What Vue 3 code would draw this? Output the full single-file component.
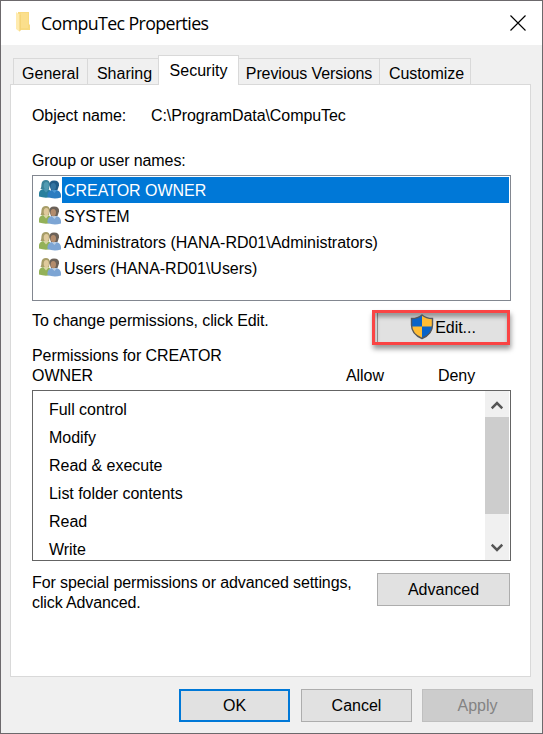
<script setup>
const tabs = [
  { label: 'General', cls: 'general' },
  { label: 'Sharing', cls: 'sharing' },
  { label: 'Security', cls: 'active' },
  { label: 'Previous Versions', cls: 'previous' },
  { label: 'Customize', cls: 'customize' },
]
const users = ['CREATOR OWNER', 'SYSTEM', 'Administrators (HANA-RD01\\Administrators)', 'Users (HANA-RD01\\Users)']
const permissions = ['Full control', 'Modify', 'Read & execute', 'List folder contents', 'Read', 'Write']
</script>

<template>
  <div class="window">
    <header class="titlebar">
      <svg class="folder" width="18" height="24" viewBox="0 0 18 24">
        <path d="M3 2h11v12l1 1v5H3z" fill="#f8da80" />
        <path d="M6 3h7v15H6z" fill="#fbdf8c" />
        <path d="M1 2l4 3v17l-4-3z" fill="#ffebae" />
        <path d="M4.500 5h1v16h-1z" fill="#f2d071" />
      </svg>
      <h1>CompuTec Properties</h1>
      <svg class="close" width="16" height="16" viewBox="0 0 16 16">
        <path d="M.5 .5l15 15M15.5 .5l-15 15" stroke="#000" stroke-width="1.15" />
      </svg>
    </header>

    <nav class="tabs">
      <div v-for="t in tabs" :key="t.label" class="tab" :class="t.cls"><span>{{ t.label }}</span></div>
    </nav>

    <main class="panel">
      <div class="object"><span class="oname">Object name:</span><span class="path">C:\ProgramData\CompuTec</span></div>
      <div class="group-label">Group or user names:</div>
      <ul class="users">
        <li v-for="(u, i) in users" :key="u" :class="{ selected: i === 0 }">
          <svg class="people" width="22" height="19" viewBox="0 0 22 19">
            <path d="M0 16.500v-3q0-3.500 4-4.500h5q3 1 3 5v3q-6 1.500-12-.5z" :fill="i ? '#93b158' : '#287f9d'" />
            <path d="M4 9l3 3.500L10 9z" :fill="i ? '#d9d6a5' : '#4a93b0'" />
            <path d="M1.500 9Q2.500 7 2.500 4q.5-4 4.500-4 3.500 0 4 4l-1 5z" :fill="i ? '#a79d68' : '#3a8299'" />
            <ellipse cx="7.300" cy="5.700" rx="2.600" ry="3.700" :fill="i ? '#dfca9c' : '#519bb2'" />
            <path d="M8.500 17v-2.500q.5-3.500 4-4.500h5q4 1 4.500 5v2.500q-7 2-13.500-.5z" :fill="i ? '#7da5d4' : '#2b7cc0'" />
            <path d="M12.500 10l3 3 2.500-3z" :fill="i ? '#b9cde4' : '#4a97d3'" />
            <path d="M10.500 5.500q-.5-5 4.500-5 5.500 0 5 5l-1.500 4.500H12z" :fill="i ? '#6b6158' : '#205a86'" />
            <ellipse cx="14.300" cy="6.600" rx="2.700" ry="3.700" :fill="i ? '#b38c6d' : '#3373a0'" />
          </svg>
          <span class="uname">{{ u }}</span>
        </li>
      </ul>
      <div class="edit-row">
        <span>To change permissions, click Edit.</span>
        <button class="edit">
          <svg width="24" height="26" viewBox="0 0 24 26">
            <path d="M12 1C9 3.500 5 4.500 1.500 4.500V11c0 7 4.500 11 10.500 13.500C18 22 22.500 18 22.500 11V4.500C19 4.500 15 3.500 12 1z" fill="#ffbd35" />
            <path d="M12 1C9 3.500 5 4.500 1.500 4.500V12.500H12zM12 12.500h10.300C21.800 18.500 17.500 22.200 12 24.500z" fill="#0864c9" />
            <path d="M12 1C9 3.500 5 4.500 1.500 4.500V11c0 7 4.500 11 10.500 13.500C18 22 22.500 18 22.500 11V4.500C19 4.500 15 3.500 12 1z" fill="none" stroke="#55585c" stroke-width="1.400" />
          </svg>
          <span>Edit...</span>
        </button>
      </div>
      <div class="perm-head">
        <div class="perm-for">Permissions for CREATOR<br>OWNER</div>
        <span class="allow">Allow</span><span class="deny">Deny</span>
      </div>
      <div class="perms">
        <ul>
          <li v-for="p in permissions" :key="p">{{ p }}</li>
        </ul>
        <div class="scroll">
          <div class="arrow"><svg width="12" height="9" viewBox="0 0 12 9"><path d="M.7 7.300L6 2l5.300 5.300" fill="none" stroke="#555" stroke-width="2.500" /></svg></div>
          <div class="thumb"></div>
          <div class="arrow down"><svg width="12" height="9" viewBox="0 0 12 9"><path d="M.7 1.700L6 7l5.300-5.300" fill="none" stroke="#555" stroke-width="2.500" /></svg></div>
        </div>
      </div>
      <div class="advanced-row">
        <p>For special permissions or advanced settings,<br>click Advanced.</p>
        <button class="btn adv">Advanced</button>
      </div>
    </main>

    <footer class="actions">
      <button class="btn ok">OK</button>
      <button class="btn">Cancel</button>
      <button class="btn apply" disabled>Apply</button>
    </footer>
  </div>
</template>

<style>
body { margin: 0; overflow: hidden; }
</style>

<style scoped>
* { box-sizing: border-box; }
.window { width: 543px; height: 734px; background: #f0f0f0; border: 1px solid #6c696c; font: 16px/20px "Liberation Sans", Arial, sans-serif; color: #000; white-space: nowrap; display: flex; flex-direction: column; }
.titlebar { height: 44px; flex: none; background: #fff; display: flex; align-items: center; padding: 0 16px 0 14px; }
.folder { margin-top: -2px; }
h1 { margin: 0 0 0 8px; font: 400 17.8px/24px "Open Sans", "Noto Sans", sans-serif; letter-spacing: -.62px; flex: 1; }
.tabs { height: 39px; padding: 0 0 0 12px; display: flex; align-items: flex-end; flex: none; }
.tab { height: 26px; border: 1px solid #d9d9d9; border-bottom: 0; border-right: 0; display: flex; justify-content: center; align-items: center; padding-top: 4px; }
.general { width: 74px; }
.sharing { width: 71px; padding-left: 3px; }
.sharing span { height: 18px; overflow: hidden; margin-bottom: 2px; }
.active { width: 81px; height: 30px; background: #fff; border-right: 1px solid #d9d9d9; margin-bottom: -1px; z-index: 1; padding-top: 1px; }
.previous { width: 140px; border-left: 0; letter-spacing: -.1px; }
.customize { width: 92px; border-right: 1px solid #d9d9d9; padding-left: 3px; letter-spacing: -.05px; }
.panel { width: 521px; height: 593px; margin-left: 9px; flex: none; background: #fff; border: 1px solid #d9d9d9; padding: 21px 19px 0 21px; display: flex; flex-direction: column; }
.object { display: flex; height: 20px; letter-spacing: -.08px; }
.oname { width: 119px; }
.group-label { margin-top: 25px; letter-spacing: -.1px; }
ul { list-style: none; margin: 0; padding: 0; }
.users { height: 126px; flex: none; margin-top: 4px; border: 1px solid #828790; padding: 1px 1px 0 6px; }
.users li { height: 26px; display: flex; align-items: center; letter-spacing: -.02px; }
.people { margin: -1px 1px 0 0; flex: none; }
.uname { flex: 1; height: 26px; line-height: 28px; padding-left: 2px; }
.selected .uname { background: #0078d7; color: #fff; }
.edit-row { display: flex; justify-content: space-between; height: 35px; margin-top: 9px; padding-right: 1px; flex: none; }
.edit-row > span { padding-top: 1px; letter-spacing: -.1px; }
.edit { width: 138px; height: 35px; border: 3px solid #fa4444; background: linear-gradient(90deg, #f4f4f4 2px, #999 2px, #999 3px, #e1e1e1 3px) padding-box; font: inherit; color: #000; padding: 0 0 0 4px; display: flex; align-items: center; justify-content: center; gap: 1px; box-shadow: 1px 4px 5px #0006, inset 1px 4px 4px #0005; }
.edit svg { margin-top: -1px; }
.edit > span { letter-spacing: -.05px; }
.perm-head { display: flex; height: 40px; margin-top: 1px; align-items: flex-end; flex: none; letter-spacing: -.07px; }
.perm-for { width: 314px; }
.allow { width: 92px; }
.perms { height: 171px; margin-top: 4px; border: 1px solid #646464; display: flex; justify-content: space-between; overflow: hidden; flex: none; padding-right: 1px; }
.perms ul { padding: 5px 0 0 16px; height: 169px; overflow: hidden; }
.perms li { height: 28px; line-height: 28px; letter-spacing: -.03px; }
.scroll { width: 24px; height: 169px; background: #f0f0f0; display: flex; flex-direction: column; }
.arrow { height: 26px; flex: none; display: flex; align-items: center; justify-content: center; padding-top: 2px; }
.down { margin-top: auto; padding-top: 0; }
.thumb { height: 97px; flex: none; background: #cdcdcd; }
.advanced-row { display: flex; justify-content: space-between; margin-top: 12px; padding-right: 1px; }
p { margin: 0; letter-spacing: -.11px; }
.btn { width: 111px; height: 33px; border: 1px solid #adadad; background: #e1e1e1; font: inherit; color: #000; padding: 0; }
.adv { width: 133px; }
.actions { display: flex; justify-content: flex-end; gap: 10px; margin-top: 12px; padding-right: 9px; }
.ok { border: 2px solid #0078d7; margin-right: 1px; }
.apply { background: #ccc; border-color: #bfbfbf; color: #838383; }
</style>
